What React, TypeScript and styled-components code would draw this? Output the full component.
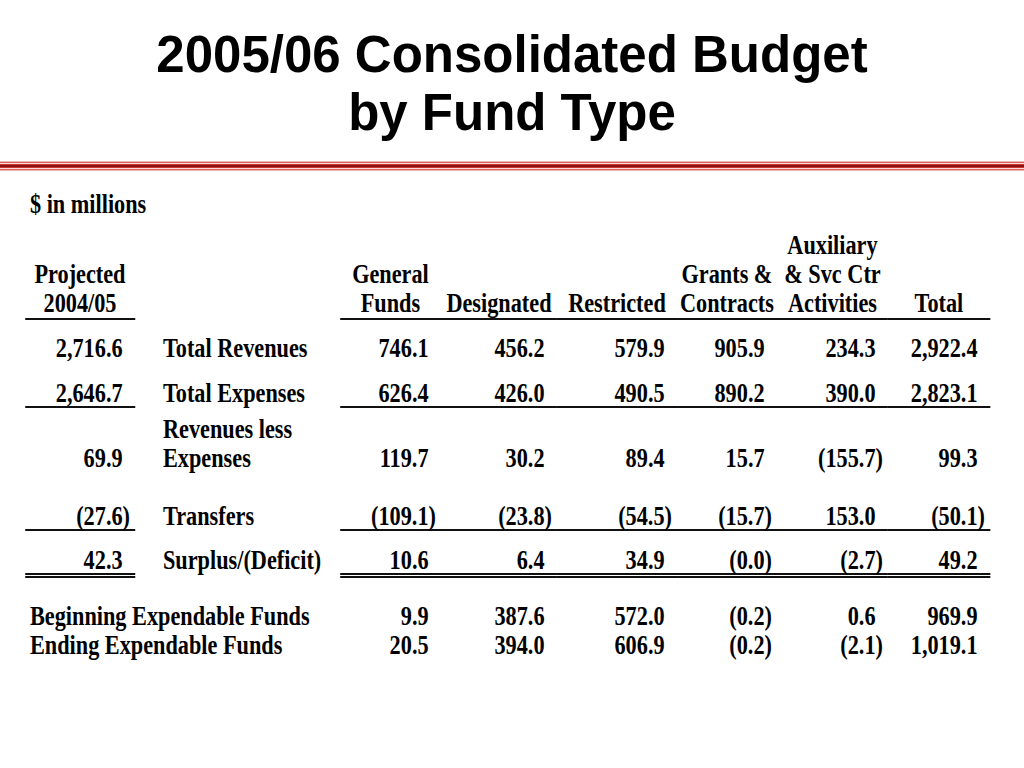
import React from 'react';
import styled, { createGlobalStyle } from 'styled-components';

const S = 0.84;
const u = (px: number) => `${(px / S).toFixed(2)}px`;

const Global = createGlobalStyle`
  html, body { margin: 0; padding: 0; background: #fff; }
  body { width: 1024px; height: 768px; overflow: hidden; }
`;

const Slide = styled.div`
  width: 1024px;
  height: 768px;
  background: #fff;
  overflow: hidden;
`;

const Title = styled.h1`
  margin: 26px 0 0;
  font-family: "Liberation Sans", Arial, sans-serif;
  font-weight: 700;
  font-size: 51px;
  line-height: 58px;
  text-align: center;
  color: #000;
`;

const Divider = styled.div`
  margin-top: 19px;
  height: 10px;
  background: linear-gradient(
    to bottom,
    #e8b4b4 0 1px,
    #e06060 1px 2px,
    #f8d8d8 2px 3px,
    #cc3333 3px 4px,
    #8b1010 4px 6px,
    #cc3333 6px 7px,
    #f8d8d8 7px 8px,
    #e06060 8px 9px,
    #e8b4b4 9px 10px
  );
`;

const Sheet = styled.div`
  width: ${u(1024)};
  box-sizing: border-box;
  padding-left: ${u(25)};
  transform: scaleX(${S});
  transform-origin: 0 0;
  font-family: "Liberation Serif", "Times New Roman", serif;
  font-weight: 700;
  font-size: 26.5px;
  line-height: 29px;
  color: #000;
`;

const Caption = styled.div`
  margin-top: 19px;
  padding-left: ${u(5)};
`;

type RuleKind = 'none' | 'single' | 'double';

const Row = styled.div<{ $gap: number; $tight?: boolean }>`
  display: grid;
  grid-template-columns: ${[110, 205, 101, 116, 120, 100, 111, 102].map(u).join(' ')};
  align-items: end;
  margin-top: ${(p) => p.$gap}px;
  line-height: ${(p) => (p.$tight ? '26px' : '29px')};
`;

const ruleCss = (r: RuleKind, show: boolean) => {
  if (r === 'single') return `border-bottom: 2px solid ${show ? '#111' : 'transparent'};`;
  if (r === 'double') return `border-bottom: 5px double ${show ? '#111' : 'transparent'};`;
  return '';
};

const Head = styled.div<{ $rule?: RuleKind }>`
  display: flex;
  flex-direction: column;
  align-items: center;
  text-align: center;
  white-space: nowrap;
  ${(p) => ruleCss(p.$rule ?? 'none', true)}
`;

const Num = styled.div<{ $rule: RuleKind; $paren: boolean }>`
  text-align: right;
  white-space: nowrap;
  padding-right: ${(p) => (p.$paren ? u(5) : `calc(${u(5)} + 0.333em)`)};
  ${(p) => ruleCss(p.$rule, true)}
`;

const Label = styled.div<{ $rule: RuleKind }>`
  padding-left: ${u(28)};
  white-space: nowrap;
  ${(p) => ruleCss(p.$rule, false)}
`;

const WideLabel = styled.div`
  grid-column: span 2;
  padding-left: ${u(5)};
  white-space: nowrap;
`;

const Blank = styled.div``;

type Line = {
  gap: number;
  rule: RuleKind;
  prior?: string;
  label: string[];
  values: string[];
  wide?: boolean;
};

const lines: Line[] = [
  { gap: 14, rule: 'none', prior: '2,716.6', label: ['Total Revenues'], values: ['746.1', '456.2', '579.9', '905.9', '234.3', '2,922.4'] },
  { gap: 17, rule: 'single', prior: '2,646.7', label: ['Total Expenses'], values: ['626.4', '426.0', '490.5', '890.2', '390.0', '2,823.1'] },
  { gap: 7, rule: 'none', prior: '69.9', label: ['Revenues less', 'Expenses'], values: ['119.7', '30.2', '89.4', '15.7', '(155.7)', '99.3'] },
  { gap: 30, rule: 'single', prior: '(27.6)', label: ['Transfers'], values: ['(109.1)', '(23.8)', '(54.5)', '(15.7)', '153.0', '(50.1)'] },
  { gap: 16, rule: 'double', prior: '42.3', label: ['Surplus/(Deficit)'], values: ['10.6', '6.4', '34.9', '(0.0)', '(2.7)', '49.2'] },
  { gap: 24, rule: 'none', wide: true, label: ['Beginning Expendable Funds'], values: ['9.9', '387.6', '572.0', '(0.2)', '0.6', '969.9'] },
  { gap: 0, rule: 'none', wide: true, label: ['Ending Expendable Funds'], values: ['20.5', '394.0', '606.9', '(0.2)', '(2.1)', '1,019.1'] },
];

const heads: string[][] = [
  ['General', 'Funds'],
  ['Designated'],
  ['Restricted'],
  ['Grants &', 'Contracts'],
  ['Auxiliary', '& Svc Ctr', 'Activities'],
  ['Total'],
];

const isParen = (v: string) => v.endsWith(')');

export default function App() {
  return (
    <Slide>
      <Global />
      <Title>
        2005/06 Consolidated Budget
        <br />
        by Fund Type
      </Title>
      <Divider />
      <Sheet>
        <Caption>$ in millions</Caption>
        <Row $gap={12}>
          <Head $rule="single">
            <span>Projected</span>
            <span>2004/05</span>
          </Head>
          <Blank />
          {heads.map((h, i) => (
            <Head key={i} $rule="single">
              {h.map((t) => (
                <span key={t}>{t}</span>
              ))}
            </Head>
          ))}
        </Row>
        {lines.map((ln, i) => (
          <Row key={i} $gap={ln.gap} $tight={ln.rule !== 'none'}>
            {ln.wide ? (
              <WideLabel>{ln.label[0]}</WideLabel>
            ) : (
              <>
                <Num $rule={ln.rule} $paren={isParen(ln.prior ?? '')}>
                  {ln.prior}
                </Num>
                <Label $rule={ln.rule}>
                  {ln.label.map((t, k) => (
                    <div key={k}>{t}</div>
                  ))}
                </Label>
              </>
            )}
            {ln.values.map((v, k) => (
              <Num key={k} $rule={ln.rule} $paren={isParen(v)}>
                {v}
              </Num>
            ))}
          </Row>
        ))}
      </Sheet>
    </Slide>
  );
}
